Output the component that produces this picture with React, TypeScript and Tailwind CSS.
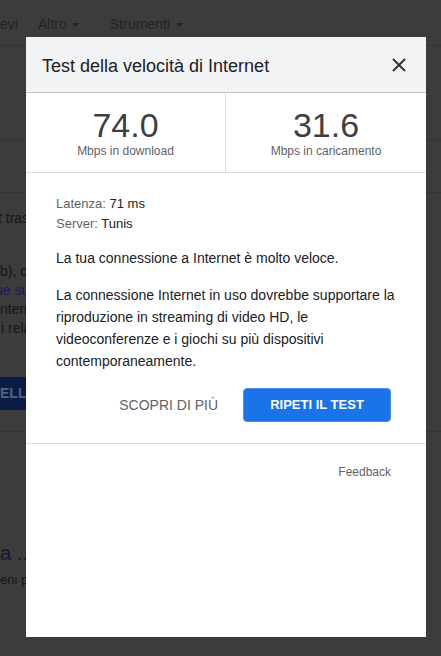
import React from "react"

function Caret() {
	return (
		<svg width="7" height="4" viewBox="0 0 7 4" className="mt-[1px]">
			<polygon points="0,0 7,0 3.5,4" fill="#222222" />
		</svg>
	)
}

function BackgroundPage() {
	return (
		<div className="flex flex-col text-[14px] text-[#151515]">
			<div className="flex h-[46px] items-center border-b border-[#333333] pt-[3px] text-[#232323]">
				<span className="w-[38px]">evi</span>
				<span className="flex w-[72px] items-center gap-[5px]">
					Altro <Caret />
				</span>
				<span className="flex items-center gap-[6px]">
					Strumenti <Caret />
				</span>
			</div>
			<div className="h-[94px] border-b border-[#333333]" />
			<div className="h-[53px] border-b border-[#333333]" />

			<p className="mt-[15px] -ml-[2px] whitespace-nowrap leading-[20px]">t trasferiti</p>
			<div className="mt-[34px] whitespace-nowrap leading-[19px]">
				<p>b), con</p>
				<p className="-ml-[5px] text-[#1c1850]">ue sul</p>
				<p>nternet</p>
				<p className="pl-[1px]">i relativi</p>
			</div>

			<div className="mt-[39px] flex h-[33px] w-[200px] items-center bg-[#0a1c45] font-bold text-[#55627f]">
				ELLA
			</div>
			<div className="h-[22px] border-b border-[#333333]" />

			<p className="mt-[109px] whitespace-nowrap text-[20px] leading-[24px] text-[#1e1238]">a ...</p>
			<p className="mt-[6px] whitespace-nowrap text-[13px] leading-[18px]">eni più</p>
		</div>
	)
}

function SpeedTestDialog() {
	return (
		<div className="absolute left-[26px] top-[37px] flex h-[600px] w-[400px] flex-col bg-white">
			<div className="flex h-[56px] shrink-0 items-center justify-between border-b border-[#c6c6c6] bg-[#f1f3f4] pl-[16px] pr-[20px]">
				<h2 className="pt-[3px] text-[18px] text-[#202124]">Test della velocità di Internet</h2>
				<button className="flex h-[14px] w-[14px] items-center justify-center">
					<svg width="14" height="14" viewBox="0 0 14 14">
						<path d="M1 1 L13 13 M13 1 L1 13" stroke="#303134" strokeWidth="1.9" />
					</svg>
				</button>
			</div>

			<div className="grid h-[80px] shrink-0 grid-cols-2 border-b border-[#dadce0]">
				<div className="flex flex-col items-center border-r border-[#dadce0] pt-[14px]">
					<span className="text-[34px] leading-[36px] text-[#3c4043]">74.0</span>
					<span className="text-[12px] leading-[16px] text-[#5f6368]">Mbps in download</span>
				</div>
				<div className="flex flex-col items-center pt-[14px]">
					<span className="text-[34px] leading-[36px] text-[#3c4043]">31.6</span>
					<span className="text-[12px] leading-[16px] text-[#5f6368]">Mbps in caricamento</span>
				</div>
			</div>

			<div className="border-b border-[#dadce0] px-[30px] pt-[21px] pb-[21px]">
				<div className="text-[13px] leading-[20px] text-[#5f6368]">
					<p>
						Latenza: <span className="text-[#202124]">71 ms</span>
					</p>
					<p>
						Server: <span className="text-[#202124]">Tunis</span>
					</p>
				</div>
				<p className="mt-[13px] text-[14px] leading-[22px] text-[#202124]">
					La tua connessione a Internet è molto veloce.
				</p>
				<p className="mt-[15px] whitespace-nowrap text-[14px] leading-[22px] text-[#202124]">
					La connessione Internet in uso dovrebbe supportare la
					<br />
					riproduzione in streaming di video HD, le
					<br />
					videoconferenze e i giochi su più dispositivi
					<br />
					contemporaneamente.
				</p>
				<div className="mt-[16px] mr-[5px] flex items-center justify-end">
					<button className="mr-[25px] text-[14px] text-[#5f6368]">SCOPRI DI PIÙ</button>
					<button className="h-[34px] w-[148px] rounded-[4px] border border-[#4d8ef0] bg-[#1a73e8] text-[13px] font-bold text-white">
						RIPETI IL TEST
					</button>
				</div>
			</div>

			<div className="pt-[20px] pr-[35px] text-right text-[12px] leading-[16px] text-[#5f6368]">Feedback</div>
		</div>
	)
}

export default function App() {
	return (
		<div className="relative h-[656px] w-[441px] overflow-hidden bg-[#3c3c3c] font-['Liberation_Sans',Arial,sans-serif]">
			<BackgroundPage />
			<SpeedTestDialog />
		</div>
	)
}
